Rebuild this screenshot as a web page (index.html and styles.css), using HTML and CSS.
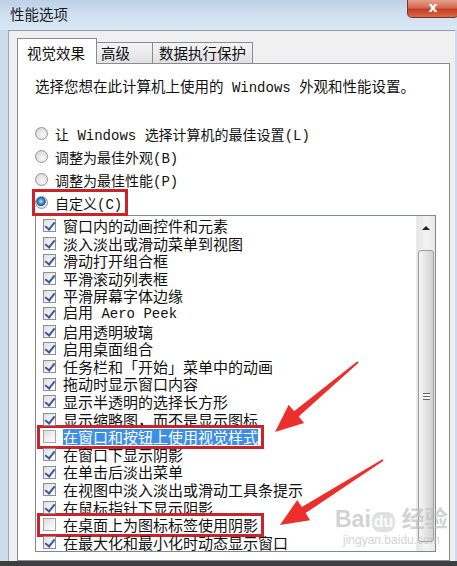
FILE: index.html
```html
<!DOCTYPE html>
<html lang="zh-CN">
<head>
    <meta charset="UTF-8">
    <meta name="viewport" content="width=device-width, initial-scale=1.0">
    <title>性能选项</title>
    <link rel="stylesheet" href="styles.css">
</head>
<body>
    <div class="window">
        <div class="titlebar">
            <span class="title">性能选项</span>
            <span class="close">x</span>
        </div>

        <div class="client">
            <div class="tabs">
                <span class="tab active">视觉效果</span>
                <span class="tab tab-wide">高级</span>
                <span class="tab">数据执行保护</span>
            </div>

            <div class="panel">
                <p class="intro">选择您想在此计算机上使用的<span class="en"> Windows </span>外观和性能设置。</p>

                <div class="radios">
                    <label class="radio"><span class="dot"></span><span>让<span class="en"> Windows </span>选择计算机的最佳设置<span class="en">(L)</span></span></label>
                    <label class="radio"><span class="dot"></span><span>调整为最佳外观<span class="en">(B)</span></span></label>
                    <label class="radio"><span class="dot"></span><span>调整为最佳性能<span class="en">(P)</span></span></label>
                    <label class="radio marked"><span class="dot on"></span><span>自定义<span class="en">(C)</span></span></label>
                </div>

                <div class="listbox">
                    <ul class="items">
                        <li class="item"><span class="box on"></span>窗口内的动画控件和元素</li>
                        <li class="item"><span class="box on"></span>淡入淡出或滑动菜单到视图</li>
                        <li class="item"><span class="box on"></span>滑动打开组合框</li>
                        <li class="item"><span class="box on"></span>平滑滚动列表框</li>
                        <li class="item"><span class="box on"></span>平滑屏幕字体边缘</li>
                        <li class="item"><span class="box on"></span><span>启用<span class="en"> Aero Peek</span></span></li>
                        <li class="item"><span class="box on"></span>启用透明玻璃</li>
                        <li class="item"><span class="box on"></span>启用桌面组合</li>
                        <li class="item"><span class="box on"></span>任务栏和「开始」菜单中的动画</li>
                        <li class="item"><span class="box on"></span>拖动时显示窗口内容</li>
                        <li class="item"><span class="box on"></span>显示半透明的选择长方形</li>
                        <li class="item"><span class="box on"></span>显示缩略图，而不是显示图标</li>
                        <li class="item"><span class="mark"><span class="box"></span><span class="sel">在窗口和按钮上使用视觉样式</span></span></li>
                        <li class="item"><span class="box on"></span>在窗口下显示阴影</li>
                        <li class="item"><span class="box on"></span>在单击后淡出菜单</li>
                        <li class="item"><span class="box on"></span>在视图中淡入淡出或滑动工具条提示</li>
                        <li class="item"><span class="box on"></span>在鼠标指针下显示阴影</li>
                        <li class="item"><span class="mark"><span class="box"></span>在桌面上为图标标签使用阴影</span></li>
                        <li class="item"><span class="box on"></span>在最大化和最小化时动态显示窗口</li>
                    </ul>
                    <div class="scrollbar">
                        <div class="sb-up"><span class="tri"></span></div>
                        <div class="thumb"><span class="grip"></span></div>
                    </div>
                </div>
            </div>
        </div>
        <div class="bottom-edge"></div>
    </div>

    <!-- annotation arrows -->
    <svg class="arrows" width="457" height="566" viewBox="0 0 457 566">
        <polygon points="358.6,362.8 298.7,416.6 304.1,423.1 275,432 288.7,404.7 294.1,411.2 357.4,361.2" />
        <polygon points="383.5,460.8 305.6,513.1 310.1,520.3 280,525 297.3,499.9 301.8,507.1 382.5,459.2" />
    </svg>

    <div class="watermark">
        <div class="wm-logo">Bai<span class="wm-du">du</span> 经验</div>
        <div class="wm-url">jingyan.baidu.com</div>
    </div>
</body>
</html>
```

FILE: styles.css
```css
/* Basic Reset */
* {
    margin: 0;
    padding: 0;
    box-sizing: border-box;
}

body {
    width: 457px;
    height: 566px;
    overflow: hidden;
    position: relative;
    font-family: "Noto Sans CJK SC", sans-serif;
    background-color: #cddcec;
    color: #111;
}

.en {
    font-family: "Liberation Mono", monospace;
    white-space: pre;
}

.window {
    display: flex;
    flex-direction: column;
    height: 566px;
}

/* title bar */
.titlebar {
    height: 30px;
    flex: none;
    display: flex;
    justify-content: space-between;
    align-items: flex-start;
    background: linear-gradient(180deg, #bcd0e6 0%, #cfdff0 45%, #dbe7f4 100%);
}

.title {
    font-size: 14.5px;
    line-height: 28px;
    padding-left: 10px;
    color: #1c1c1c;
}

.close {
    width: 52px;
    height: 18px;
    margin-right: -2px;
    border: 1px solid #7d3326;
    border-top: none;
    border-radius: 0 0 5px 5px;
    background: linear-gradient(180deg, #e6a08f 0%, #d36b52 45%, #c43e22 55%, #d8694b 100%);
    color: #fff;
    font-family: "DejaVu Sans", sans-serif;
    font-weight: bold;
    font-size: 14px;
    line-height: 15px;
    text-align: center;
}

/* dialog body */
.client {
    flex: 1;
    margin: 0 2px 0 8px;
    padding: 7px 5px 0 8px;
    background-color: #f0f0f0;
    border-left: 1px solid #9aa9bc;
    border-top: 1px solid #8d9db2;
    display: flex;
    flex-direction: column;
}

.tabs {
    display: flex;
    align-items: flex-end;
    height: 26px;
    margin-bottom: -1px;
    position: relative;
    z-index: 1;
}

.tab {
    height: 21px;
    margin-bottom: 1px;
    padding: 0 6px;
    font-size: 14.5px;
    line-height: 20px;
    border: 1px solid #898c95;
    border-bottom: none;
    border-left: none;
    background: linear-gradient(180deg, #f4f4f4, #e1e1e1);
}

.tab-wide {
    padding: 0 22px 0 4px;
}

.tab.active {
    height: 26px;
    margin-bottom: 0;
    padding: 0 11px 0 9px;
    line-height: 28px;
    border-left: 1px solid #898c95;
    background: #fff;
}

.panel {
    flex: 1;
    background: #fff;
    border: 1px solid #898c95;
    padding: 12px 13px 0 17px;
}

.intro {
    font-size: 14.5px;
    line-height: 20px;
    white-space: nowrap;
}

.intro .en {
    font-size: 14px;
}

/* radio buttons */
.radios {
    display: flex;
    flex-direction: column;
    margin-top: 24px;
}

.radio {
    height: 23px;
    display: flex;
    align-items: center;
    font-size: 14px;
    white-space: nowrap;
}

.radio .en {
    font-size: 14px;
}

.dot {
    flex: none;
    width: 13px;
    height: 13px;
    margin-right: 7px;
    border: 1px solid #939393;
    border-radius: 50%;
    background: radial-gradient(circle at 60% 65%, #f8f8f8 0%, #e3e3e3 55%, #c9c9c9 100%);
}

.dot.on {
    background: radial-gradient(circle at 45% 40%, #bde3f7 0%, #3b8fcf 30%, #1a4f86 48%, #e8e8e8 56%, #d0d0d0 100%);
}

.radio.marked {
    align-self: flex-start;
    height: 21px;
    margin-top: 1px;
    padding-right: 3px;
    outline: 3px solid #c9232b;
}

/* list with check boxes */
.listbox {
    display: flex;
    height: 337px;
    margin-top: 2px;
    border: 1px solid #828790;
    overflow: hidden;
}

.items {
    flex: 1;
    list-style: none;
    padding: 1px 0 0 7px;
}

.item {
    height: 17.6px;
    display: flex;
    align-items: center;
    font-size: 15px;
    line-height: 17.6px;
    white-space: nowrap;
}

.item .en {
    font-size: 14px;
}

.box {
    flex: none;
    position: relative;
    width: 13px;
    height: 13px;
    margin-right: 7px;
    border: 1px solid #a5a5a5;
    background: linear-gradient(135deg, #dedede 0%, #f3f3f3 60%, #fff 100%);
}

.box.on {
    border-color: #8e8f8f;
}

.box.on::after {
    content: "";
    position: absolute;
    left: 3px;
    top: 0;
    width: 4px;
    height: 8px;
    border-right: 2px solid #3a57a0;
    border-bottom: 2px solid #3a57a0;
    transform: rotate(38deg);
}

.mark {
    display: flex;
    align-items: center;
    height: 17.6px;
    margin-left: -3px;
    padding: 0 3px;
    outline: 3px solid #c9232b;
}

.sel {
    background-color: #3d8ee6;
    color: #fff;
    line-height: 16px;
}

/* scroll bar */
.scrollbar {
    width: 19px;
    flex: none;
    display: flex;
    flex-direction: column;
    align-items: center;
    background: linear-gradient(90deg, #e6e6e6, #f3f3f3 50%, #e9e9e9);
    border-left: 1px solid #ececec;
}

.sb-up {
    height: 34px;
    width: 100%;
    display: flex;
    justify-content: center;
    padding-top: 10px;
}

.tri {
    width: 0;
    height: 0;
    border-left: 4px solid transparent;
    border-right: 4px solid transparent;
    border-bottom: 4px solid #222;
}

.thumb {
    width: 16px;
    height: 292px;
    border: 1px solid #9c9c9c;
    border-radius: 3px;
    background: linear-gradient(90deg, #f5f5f5, #e4e4e4 50%, #d2d2d2);
    display: flex;
    align-items: center;
    justify-content: center;
}

.grip {
    width: 7px;
    height: 7px;
    border-top: 1px solid #666;
    border-bottom: 1px solid #666;
    background: linear-gradient(#fff 0 2px, #666 2px 3px, #fff 3px);
}

.bottom-edge {
    height: 5px;
    flex: none;
    background-color: #3f3f3f;
}

/* annotations */
.arrows {
    position: absolute;
    left: 0;
    top: 0;
    pointer-events: none;
}

.arrows polygon {
    fill: #ec2f2c;
}

.watermark {
    position: absolute;
    left: 335px;
    top: 506px;
    color: rgba(190, 190, 190, 0.7);
    font-family: "Liberation Sans", "Noto Sans CJK SC", sans-serif;
    text-align: center;
}

.wm-logo {
    font-size: 23px;
    font-weight: bold;
    line-height: 26px;
}

.wm-du {
    display: inline-block;
    margin-left: 1px;
    padding: 0 2px;
    border-radius: 8px;
    background-color: rgba(200, 200, 200, 0.55);
    color: rgba(255, 255, 255, 0.9);
    font-size: 16px;
    line-height: 20px;
}

.wm-url {
    font-size: 12px;
    line-height: 16px;
}
```
